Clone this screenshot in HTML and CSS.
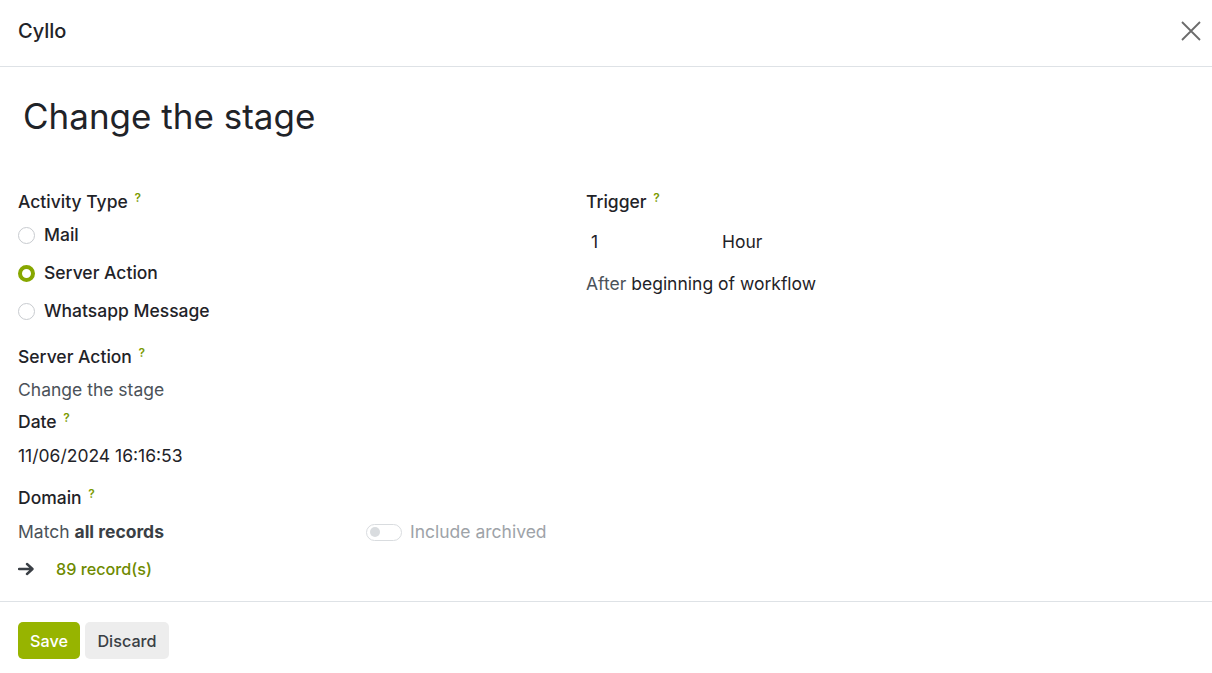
FILE: index.html
```html
<!DOCTYPE html>
<html>
<head>
<meta charset="utf-8">
<link rel="stylesheet" href="styles.css">
</head>
<body>
<div class="modal">
  <header class="modal-header">
    <h4 class="modal-title">Cyllo</h4>
    <button class="close" aria-label="Close">
      <svg width="20" height="20" viewBox="0 0 20 20"><path d="M1 1L19 19M19 1L1 19" stroke="#6b6b6b" stroke-width="1.8" fill="none"/></svg>
    </button>
  </header>
  <main class="modal-body">
    <h1 class="title">Change the stage</h1>
    <div class="grid">
      <div class="col">
        <div class="label lbl-activity">Activity Type <sup class="help">?</sup></div>
        <div class="radios">
          <label class="radio"><span class="dot"></span>Mail</label>
          <label class="radio"><span class="dot checked"></span>Server Action</label>
          <label class="radio"><span class="dot"></span>Whatsapp Message</label>
        </div>
        <div class="label lbl-server">Server Action <sup class="help">?</sup></div>
        <div class="value muted">Change the stage</div>
        <div class="label lbl-date">Date <sup class="help">?</sup></div>
        <div class="value date-value">11/06/2024 16:16:53</div>
        <div class="label lbl-domain">Domain <sup class="help">?</sup></div>
        <div class="domain-row">
          <div class="match">Match <b>all records</b></div>
          <div class="archived"><span class="toggle"><span class="knob"></span></span>Include archived</div>
        </div>
        <div class="records">
          <svg class="arrow" width="17" height="14" viewBox="0 0 17 14"><path d="M1 7H14M9 2L14.5 7L9 12" stroke="#3a3f45" stroke-width="2.4" fill="none" stroke-linecap="round" stroke-linejoin="round"/></svg>
          <span class="count">89 record(s)</span>
        </div>
      </div>
      <div class="col">
        <div class="label lbl-activity">Trigger <sup class="help">?</sup></div>
        <div class="trigger-row">
          <span class="num">1</span>
          <span class="unit">Hour</span>
        </div>
        <div class="after"><span class="muted">After</span> beginning of workflow</div>
      </div>
    </div>
  </main>
  <footer class="modal-footer">
    <button class="btn btn-primary">Save</button>
    <button class="btn btn-secondary">Discard</button>
  </footer>
</div>
</body>
</html>
```

FILE: styles.css
```css
* { box-sizing: border-box; }
html, body { margin: 0; padding: 0; background: #fff; }
body {
  font-family: Inter, "Noto Sans", sans-serif;
  color: #1f2328;
  font-size: 17.5px;
  width: 1212px;
  height: 673px;
  overflow: hidden;
}
.modal { display: flex; flex-direction: column; height: 673px; }
.modal-header {
  height: 67px;
  border-bottom: 1px solid #dee2e6;
  display: flex;
  align-items: center;
  justify-content: space-between;
  padding: 0 10px 4px 18px;
  flex-shrink: 0;
}
.modal-title { margin: 0; font-size: 20px; font-weight: 500; color: #1f2328; }
.close { background: none; border: 0; padding: 0; width: 22px; height: 22px; display: flex; align-items: center; justify-content: center; }
.modal-body { padding: 0 18px; flex: 1; }
.title {
  margin: 0;
  padding: 28px 0 0 5px;
  height: 123px;
  font-size: 35px;
  font-weight: 400;
  color: #1f2328;
  line-height: 42px;
}
.grid { display: grid; grid-template-columns: 568px 1fr; }
.label { font-weight: 500; line-height: 24px; color: #1f2328; }
.help { color: #7a9a01; font-size: 12px; font-weight: 600; vertical-align: 6px; margin-left: 2px; line-height: 0; }
.radios { display: flex; flex-direction: column; gap: 14px; margin-top: 9px; }
.radio { display: flex; align-items: center; font-weight: 500; line-height: 24px; }
.dot { width: 17px; height: 17px; border-radius: 50%; border: 1px solid #c8cbcf; margin-right: 9px; background: #fff; flex-shrink: 0; }
.dot.checked { border: 4.5px solid #87a700; background: #fff; box-shadow: inset 0 0 0 1px #fff; }
.lbl-server { margin-top: 22px; }
.value { line-height: 24px; margin-top: 9px; }
.date-value { margin-top: 10px; }
.muted { color: #4b5259; }
.lbl-date { margin-top: 8px; }
.lbl-domain { margin-top: 18px; }
.domain-row { display: flex; align-items: center; margin-top: 10px; line-height: 24px; }
.match { width: 348px; color: #4b5259; }
.match b { color: #3a3f45; font-weight: 700; }
.archived { display: flex; align-items: center; color: #9ea3a8; }
.toggle { width: 36px; height: 17px; border: 1px solid #d9dcdf; border-radius: 9px; margin-right: 8px; position: relative; display: inline-block; }
.knob { position: absolute; left: 3px; top: 2.5px; width: 10px; height: 10px; border-radius: 50%; background: #d9dcdf; }
.records { display: flex; align-items: center; margin-top: 13px; line-height: 24px; }
.arrow { margin-right: 21px; }
.count { color: #6e8a00; font-size: 16.2px; font-weight: 500; }
.trigger-row { display: flex; margin-top: 16px; line-height: 24px; }
.num { width: 136px; padding-left: 5px; color: #1f2328; }
.unit { color: #1f2328; }
.after { margin-top: 18px; line-height: 24px; }
.modal-footer {
  height: 72px;
  border-top: 1px solid #dee2e6;
  display: flex;
  align-items: flex-start;
  padding: 20px 18px 0;
  gap: 5px;
  flex-shrink: 0;
}
.btn {
  height: 37px;
  border: 0;
  border-radius: 5px;
  font-family: Inter, "Noto Sans", sans-serif;
  font-size: 16.2px;
  font-weight: 500;
  padding: 0 12px;
}
.btn-primary { background: #97b400; color: #fff; width: 62px; }
.btn-secondary { background: #ededed; color: #3a3f45; width: 84px; }
```
